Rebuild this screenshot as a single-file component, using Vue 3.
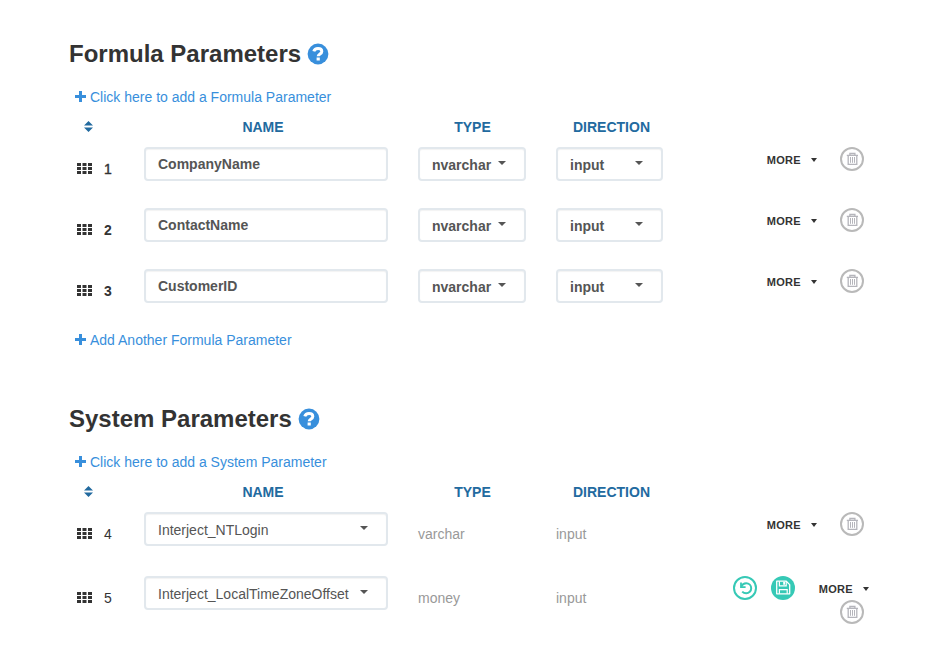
<script setup>
const sections = [
  {
    title: 'Formula Parameters',
    kind: 'formula',
    link: 'Click here to add a Formula Parameter',
    footer: 'Add Another Formula Parameter',
    rows: [
      { id: 1, name: 'CompanyName', type: 'nvarchar', direction: 'input' },
      { id: 2, name: 'ContactName', type: 'nvarchar', direction: 'input' },
      { id: 3, name: 'CustomerID', type: 'nvarchar', direction: 'input' },
    ],
  },
  {
    title: 'System Parameters',
    kind: 'system',
    link: 'Click here to add a System Parameter',
    rows: [
      { id: 4, name: 'Interject_NTLogin', type: 'varchar', direction: 'input' },
      { id: 5, name: 'Interject_LocalTimeZoneOffset', type: 'money', direction: 'input', edited: true },
    ],
  },
]
</script>

<template>
  <main class="page">
    <section v-for="s in sections" :key="s.kind" class="section" :class="s.kind">
      <h2 class="title">
        <span>{{ s.title }}</span>
        <svg class="help" viewBox="0 0 22 22" width="22" height="22">
          <circle cx="11" cy="11" r="10.4" fill="#388fdc" />
          <path d="M6.8 8.3C7.4 6.2 9 5.5 11 5.5c2.2 0 3.8 1.1 3.8 2.9 0 2.6-3.6 2.4-3.6 4.9" fill="none" stroke="#fff" stroke-width="3" />
          <rect x="9.6" y="14.5" width="3.2" height="3" fill="#fff" />
        </svg>
      </h2>
      <a class="link">
        <svg class="plus" viewBox="0 0 11 11" width="11" height="11"><path d="M5.5 0v11M0 5.5h11" stroke="#388fdc" stroke-width="3" /></svg>
        <span>{{ s.link }}</span>
      </a>
      <div class="grid head">
        <svg class="sort" viewBox="0 0 9 11" width="9" height="11"><path d="M4.5 0 9 4.5H0zM0 6.5h9L4.5 11z" fill="#226a9f" /></svg>
        <span class="h-name">NAME</span>
        <span class="h-type">TYPE</span>
        <span class="h-dir">DIRECTION</span>
      </div>
      <div v-for="r in s.rows" :key="r.id" class="grid row">
        <div class="order">
          <svg class="grip" viewBox="0 0 15 11" width="15" height="11">
            <path d="M0 0h4v3H0zM5.5 0h4v3h-4zM11 0h4v3h-4zM0 4h4v3H0zM5.5 4h4v3h-4zM11 4h4v3h-4zM0 8h4v3H0zM5.5 8h4v3h-4zM11 8h4v3h-4z" fill="#333" />
          </svg>
          <span class="num" :class="{ strong: r.id === 2 || r.id === 3, semi: r.id === 1 }">{{ r.id }}</span>
        </div>
        <template v-if="s.kind === 'formula'">
          <div class="box name">{{ r.name }}</div>
          <div class="box select type"><span>{{ r.type }}</span><i class="caret"></i></div>
          <div class="box select dir"><span>{{ r.direction }}</span><i class="caret"></i></div>
        </template>
        <template v-else>
          <div class="box select sysname"><span>{{ r.name }}</span><i class="caret"></i></div>
          <div class="plain">{{ r.type }}</div>
          <div class="plain">{{ r.direction }}</div>
        </template>
        <div class="actions">
          <template v-if="r.edited">
            <svg class="undo" viewBox="0 0 24 24" width="24" height="24">
              <circle cx="12" cy="12" r="11" fill="#fff" stroke="#36c9b6" stroke-width="2" />
              <path d="M8.3 10.6C9.2 8.4 11 7.2 13.2 7.2a5 5 0 0 1 0 10c-1.7 0-2.9-.5-4-1.6" fill="none" stroke="#36c9b6" stroke-width="2" />
              <path d="M8 6.6v4.5h4.6" fill="none" stroke="#36c9b6" stroke-width="1.8" />
            </svg>
            <svg class="save" viewBox="0 0 24 24" width="24" height="24">
              <circle cx="12" cy="12" r="12" fill="#36c9b6" />
              <path d="M5.7 5.2h9.6l3.4 3.4v9.2H5.7z" fill="none" stroke="#fff" stroke-width="1.3" stroke-linejoin="round" />
              <path d="M8.4 5.2v4.7h6.8V5.2M8.4 17.8v-4.2h7.8v4.2" fill="none" stroke="#fff" stroke-width="1.2" />
              <path d="M12.2 5.7H14v3h-1.8z" fill="#fff" />
            </svg>
          </template>
          <span class="more"><span>MORE</span><i class="caret small"></i></span>
          <svg class="trash" viewBox="0 0 24 24" width="24" height="24">
            <circle cx="12" cy="12" r="11" fill="#fff" stroke="#b9b9b9" stroke-width="2" />
            <path d="M6.8 8.4h11.2M9.9 8V6.5h5V8M8.2 8.6v8.8h8.6V8.6" fill="none" stroke="#b5b5bb" stroke-width="1.3" />
            <path d="M10.5 10v5.8M12.5 10v5.8M14.5 10v5.8" fill="none" stroke="#b5b5bb" stroke-width="1" />
          </svg>
        </div>
      </div>
      <a v-if="s.footer" class="link">
        <svg class="plus" viewBox="0 0 11 11" width="11" height="11"><path d="M5.5 0v11M0 5.5h11" stroke="#388fdc" stroke-width="3" /></svg>
        <span>{{ s.footer }}</span>
      </a>
    </section>
  </main>
</template>

<style>
body { margin: 0; background: #fff; }
</style>

<style scoped>
.page {
  box-sizing: border-box;
  width: 945px;
  height: 672px;
  padding: 36px 75px 0 69px;
  overflow: hidden;
  font-family: "Liberation Sans", Arial, sans-serif;
  font-size: 14px;
  line-height: 20px;
  color: #333;
}
svg { display: block; flex: none; }
.section.formula { height: 365px; }
.title {
  display: flex;
  align-items: center;
  gap: 6px;
  height: 36px;
  margin: 0 0 15px;
  font-size: 24px;
  line-height: 36px;
  white-space: nowrap;
}
.help { margin-bottom: 1px; }
.link {
  display: flex;
  align-items: center;
  gap: 4px;
  height: 20px;
  padding-left: 6px;
  color: #388fdc;
  white-space: nowrap;
}
.plus { margin-bottom: 1px; }
.grid {
  display: grid;
  grid-template-columns: 75px 274px 138px 164px 150px;
  align-items: start;
}
.head {
  box-sizing: border-box;
  height: 40px;
  padding-top: 10px;
  color: #226a9f;
  font-weight: bold;
}
.sort { margin: 4px 0 0 15px; }
.h-name { width: 238px; text-align: center; }
.h-type { width: 109px; text-align: center; }
.h-dir { width: 111px; text-align: center; }
.row { height: 61px; }
.system .row { height: 64px; }
.order { display: flex; align-items: center; padding: 12px 0 0 8px; }
.grip { margin-bottom: 1px; }
.num { margin-left: 12px; }
.semi { -webkit-text-stroke: 0.4px #333; }
.strong { font-weight: bold; }
.box {
  box-sizing: border-box;
  width: 244px;
  height: 34px;
  padding: 0 12px;
  border: 2px solid #e2e8ed;
  border-radius: 4px;
  box-shadow: inset 0 1px 1px rgba(0, 0, 0, 0.05);
  color: #555;
  font-weight: bold;
  line-height: 30px;
  white-space: nowrap;
}
.select { display: flex; justify-content: space-between; line-height: 32px; }
.type { width: 108px; padding-right: 18px; }
.dir { width: 107px; padding: 0 18px 0 12px; }
.sysname { padding-right: 18px; font-weight: normal; }
.caret {
  width: 0;
  height: 0;
  margin-top: 12px;
  border: 4px solid transparent;
  border-top-color: #555;
  border-bottom: 0;
}
.plain { padding-top: 12px; color: #999; }
.actions {
  display: flex;
  flex-wrap: wrap;
  justify-content: flex-end;
  align-content: flex-start;
  align-items: center;
}
.save { margin: 0 24px 0 14px; }
.more {
  display: flex;
  align-items: center;
  gap: 10px;
  box-sizing: border-box;
  height: 24px;
  padding-top: 2px;
  margin-right: 1px;
  font-size: 11px;
  font-weight: bold;
  letter-spacing: 0.3px;
}
.small { margin-top: 0; border-width: 4px 3.5px 0; border-top-color: #333; }
.trash { margin: 0 6px 0 22px; }
</style>
